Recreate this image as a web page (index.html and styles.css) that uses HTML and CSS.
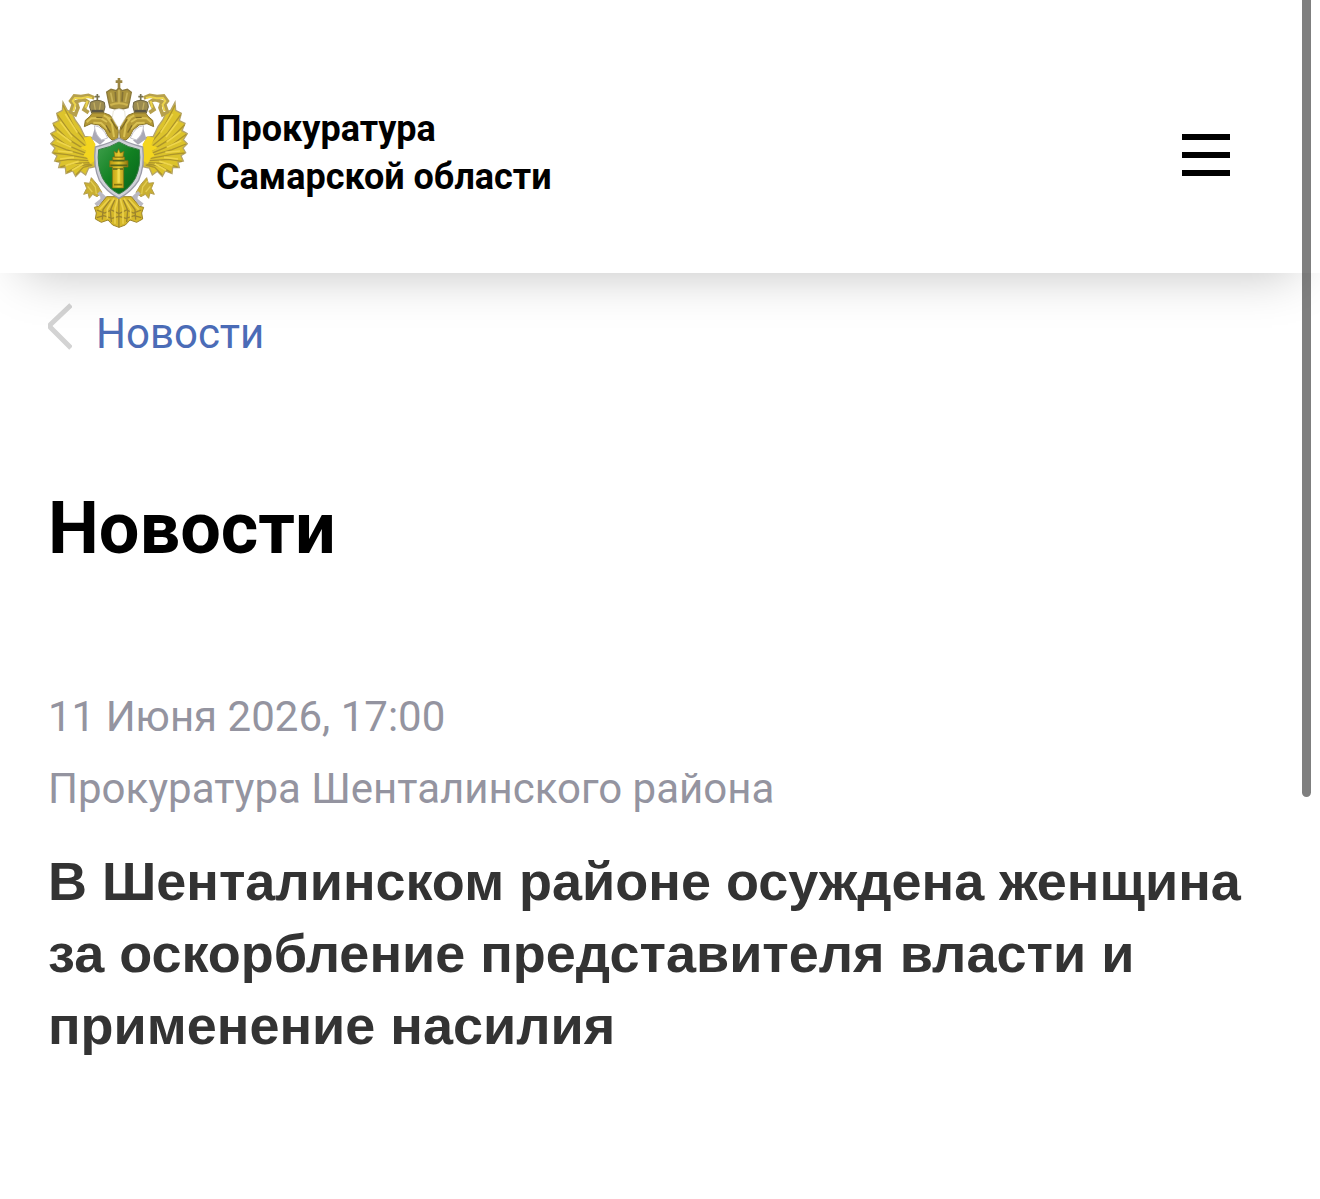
FILE: index.html
```html
<!DOCTYPE html>
<html lang="ru">
<head>
  <meta charset="utf-8">
  <meta name="viewport" content="width=device-width, initial-scale=1">
  <title>Новости — Прокуратура Самарской области</title>
  <link rel="stylesheet" href="styles.css">
</head>
<body>
  <header class="header">
    <a class="brand" href="#">
      <svg class="brand__emblem" viewBox="30 30 414 450" aria-hidden="true">
        <defs>
          <linearGradient id="shield" x1="0" y1="0" x2="1" y2="1">
            <stop offset="0" stop-color="#3fa04c"/>
            <stop offset=".5" stop-color="#128022"/>
            <stop offset="1" stop-color="#06621a"/>
          </linearGradient>
          <linearGradient id="gold" x1="0" y1="0" x2="1" y2="0">
            <stop offset="0" stop-color="#b8940f"/>
            <stop offset=".5" stop-color="#e6cb30"/>
            <stop offset="1" stop-color="#8f760f"/>
          </linearGradient>
          <g id="half">
            <!-- wing -->
            <path d="M162 232L154 208L134 205L120 176L105 155L96 133L82 127L69 103L67 127L50 136L56 158L39 166L48 188L32 197L44 215L32 227L45 240L37 254L51 263L44 279L60 283L56 299L76 299L78 317L98 309L107 325L122 310L137 321L146 300L165 296Z" fill="#dcc32c" stroke="#b5a468" stroke-width="4"/>
            <path d="M69 112L104 180L145 230M52 140L91 195L143 239M40 170L82 212L140 248M35 199L78 230L139 256M36 228L78 245L140 263M40 255L82 260L142 271M48 280L88 274L145 278M61 297L100 286L150 284M81 313L115 294L153 288M108 320L130 298L157 291" fill="none" stroke="#ad952b" stroke-width="4"/>
            <path d="M76 138L112 194M61 161L96 207M51 190L94 222M50 218L94 238M54 249L98 253M60 273L102 268M76 293L116 280M96 307L130 287" fill="none" stroke="#efd64b" stroke-width="5"/>
            <path d="M131 210L151 205L166 228L165 278L150 288L143 270L130 263L139 249L120 239L140 231Z" fill="#f3d51f"/>
            <!-- ribbon -->
            <path d="M163 90L145 82L123 86L103 84L92 99L100 109L92 132L106 140L114 119L108 101L131 94L143 101L132 125L146 134" fill="none" stroke="#b6a04c" stroke-width="11"/>
            <path d="M156 90L143 87L124 91L105 90L98 99L106 110L100 130M142 99L137 119" fill="none" stroke="#ecd44b" stroke-width="6"/>
            <!-- side crown -->
            <path d="M172 78V101M165 86H179" stroke="#777250" stroke-width="5"/>
            <path d="M151 103Q172 91 193 103L195 117L190 135H155L149 117Z" fill="#9b8b4f" stroke="#6e6542" stroke-width="3"/>
            <path d="M162 104L166 126M182 104L178 126" stroke="#c2ae60" stroke-width="4"/>
            <path d="M155 129H190" stroke="#5b5642" stroke-width="7"/>
            <!-- head and neck -->
            <path d="M133 176L136 157L150 145L157 135H193L210 142L229 165L235 190L233 216H216L205 206L195 186L176 171L153 167Z" fill="#b59a35" stroke="#8b772d" stroke-width="3"/>
            <path d="M140 163L154 151L181 150L201 162M160 164L183 165L202 183M202 149L216 168L222 207M191 142L211 153" fill="none" stroke="#d9c153" stroke-width="6"/>
            <path d="M169 148L187 149M198 172L211 194M213 154L231 184" stroke="#806d26" stroke-width="4"/>
            <path d="M165 178Q171 205 195 217L180 230L155 212Z" fill="#aaa9b6"/>
            <path d="M163 173Q188 174 203 210L185 216Q166 202 163 173Z" fill="#fff" stroke="#c3c2cb" stroke-width="3"/>
            <!-- claw and tail -->
            <path d="M154 329L172 350L186 374L171 386L158 379L148 391L144 375L131 379L140 361L133 344L149 346Z" fill="#c9af32" stroke="#b39d4c" stroke-width="3"/>
            <path d="M151 338L166 357L169 378M143 355L157 372" fill="none" stroke="#e3cd50" stroke-width="4"/>
            <path d="M176 373L194 390L167 411M181 392L210 391" fill="none" stroke="#b9b8c1" stroke-width="12"/>
            <path d="M200 386L176 415L163 418L169 435L166 453L184 463L204 456L218 471L237 478V386Z" fill="#d5b82a" stroke="#9c842a" stroke-width="3"/>
            <path d="M211 395L189 425L187 455M224 396L211 427L214 462M170 426L194 435L214 426L237 437M170 449L191 443L216 451L237 445" fill="none" stroke="#9c842e" stroke-width="4"/>
            <path d="M208 393L178 425M222 391L202 424V452M233 393L225 422V467" fill="none" stroke="#ebd04a" stroke-width="5"/>
          </g>
        </defs>
        <use href="#half"/>
        <use href="#half" transform="translate(474 0) scale(-1 1)"/>
        <!-- central crown -->
        <path d="M237 30V65M227 41H247" stroke="#9b8643" stroke-width="8"/>
        <path d="M200 72L213 64L229 68Q237 54 246 68L262 64L274 73L269 98L264 119Q237 128 210 119L205 98Z" fill="#aa933c" stroke="#8a783b" stroke-width="4"/>
        <path d="M212 74L218 102M237 65V105M262 74L256 102" stroke="#c8b258" stroke-width="5"/>
        <path d="M226 72L228 101M248 72L246 101" stroke="#857337" stroke-width="5"/>
        <path d="M211 111Q237 101 263 111" fill="none" stroke="#cfb54e" stroke-width="6"/>
        <path d="M220 129Q237 116 254 129L256 150L242 173L237 178L231 173L217 149Z" fill="#fff" stroke="#ddd8c4" stroke-width="2"/>
        <!-- shield -->
        <path d="M237 210Q211 226 166 237Q159 294 178 337Q199 371 237 391Q275 371 296 337Q315 294 308 237Q263 226 237 210Z" fill="#d0d1d8" stroke="#9b9ba8" stroke-width="4"/>
        <path d="M237 222Q211 238 176 245Q170 293 188 331Q207 364 237 378Q267 364 286 331Q304 293 298 245Q263 238 237 222Z" fill="url(#shield)" stroke="#397c46" stroke-width="3"/>
        <path d="M222 250L231 255L236 242L241 255L252 250L249 268H224ZM218 267H254V278H264V297H251V360H217V297H209V278H218Z" fill="url(#gold)" stroke="#796d13" stroke-width="2"/>
        <path d="M211 292H262M218 278H254M219 303H249" stroke="#59661b" stroke-width="5"/>
        <path d="M236 302V344" stroke="#f0dc50" stroke-width="7"/>
        <path d="M222 350H247" stroke="#84750f" stroke-width="5"/>
      </svg>
      <span class="brand__name">Прокуратура<br>Самарской области</span>
    </a>
    <button class="menu" type="button" aria-label="Открыть меню">
      <span class="menu__line"></span>
      <span class="menu__line"></span>
      <span class="menu__line"></span>
    </button>
  </header>

  <main class="page">
    <nav class="back" aria-label="Навигация">
      <a class="back__link" href="#">
        <svg class="back__arrow" viewBox="0 0 24 48" aria-hidden="true"><path d="M23 2L3 21Q1 23 3 25L23 45"/></svg>
        <span>Новости</span>
      </a>
    </nav>
    <h1 class="page__title">Новости</h1>
    <article class="article">
      <p class="article__meta"><time datetime="2026-06-11T17:00">11 Июня 2026, 17:00</time></p>
      <p class="article__meta">Прокуратура Шенталинского района</p>
      <h2 class="article__title">В Шенталинском районе осуждена женщина за оскорбление представителя власти и применение насилия</h2>
    </article>
  </main>
  <div class="scroll-thumb" aria-hidden="true"></div>
</body>
</html>
```
FILE: styles.css
```css
* {
  box-sizing: border-box;
}

body {
  margin: 0;
  background: #fff;
  color: #000;
  font-family: Roboto, "Liberation Sans", sans-serif;
}

a {
  color: inherit;
  text-decoration: none;
}

.header {
  position: relative;
  display: flex;
  align-items: center;
  justify-content: space-between;
  padding: 78px 90px 45px 50px;
  background: #fff;
  box-shadow: 0 24px 48px -24px rgba(0, 0, 0, 0.25);
}

.brand {
  display: flex;
  align-items: center;
  gap: 28px;
}

.brand__emblem {
  flex: none;
  width: 138px;
  height: 150px;
}

.brand__name {
  font-size: 36px;
  font-weight: 700;
  line-height: 48px;
}

.menu {
  display: flex;
  flex-direction: column;
  gap: 12px;
  width: 48px;
  padding: 4px 0 0;
  border: 0;
  background: none;
  cursor: pointer;
}

.menu__line {
  height: 6px;
  background: #000;
}

.page {
  padding: 30px 48px 120px;
}

.back__link {
  display: inline-flex;
  align-items: flex-start;
  gap: 24px;
  color: #4b6cb7;
  font-size: 42px;
  line-height: 62px;
}

.back__arrow {
  flex: none;
  width: 24px;
  height: 48px;
  fill: none;
  stroke: #d3d3d3;
  stroke-width: 5;
}

.page__title {
  margin: 120px 0 108px;
  font-size: 72px;
  font-weight: 700;
  line-height: 88px;
}

.article__meta {
  margin: 0;
  color: #9494a0;
  font-size: 42px;
  line-height: 72px;
}

.article__title {
  margin: 20px 0 0;
  color: #333;
  font-family: "Liberation Sans", Arial, sans-serif;
  font-size: 54px;
  font-weight: 700;
  line-height: 72px;
}

.scroll-thumb {
  position: fixed;
  top: 0;
  right: 9px;
  width: 9px;
  height: 797px;
  border-radius: 0 0 5px 5px;
  background: rgba(0, 0, 0, 0.5);
}
```
